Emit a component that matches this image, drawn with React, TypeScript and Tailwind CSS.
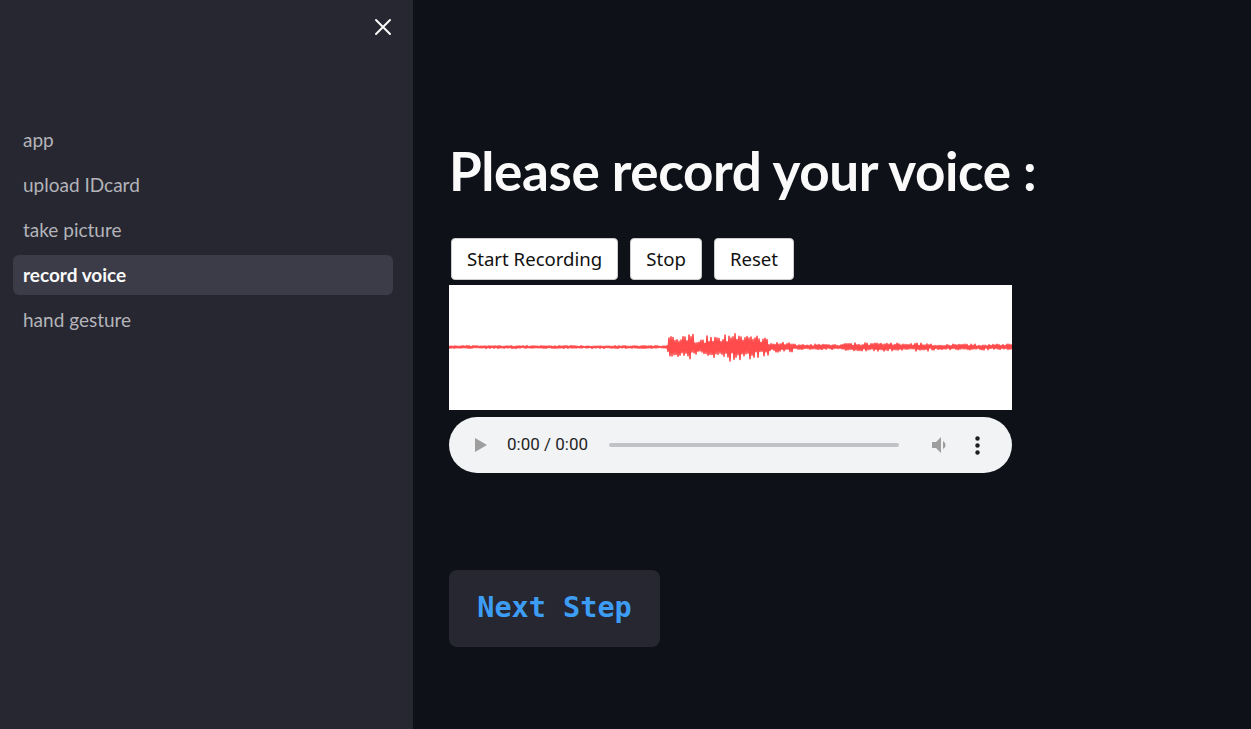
import React from "react";

function rand(seed: number) {
  const x = Math.sin(seed * 12.9898 + 78.233) * 43758.5453;
  return x - Math.floor(x);
}

function envelope(x: number): number {
  let a = 1.3;
  if (x > 218 && x < 245) a = 10 + (x - 218) * 0.1;
  else if (x >= 245 && x < 320) a = 8 + 6 * Math.sin(((x - 245) / 75) * Math.PI);
  else if (x >= 320 && x < 345) a = 5;
  else if (x >= 345 && x < 395) a = 2.6;
  else if (x >= 395 && x < 480) a = 4;
  else if (x >= 480) a = 2.8;
  return a;
}

function Waveform() {
  const W = 563;
  const H = 125;
  const c = 62;
  let d = `M0 ${c}`;
  for (let x = 0; x <= W; x += 1) {
    const a = envelope(x) * (0.35 + 0.65 * rand(x));
    const sign = x % 2 === 0 ? -1 : 1;
    d += ` L${x} ${(c + sign * a).toFixed(1)}`;
  }
  return (
    <svg width={W} height={H} viewBox={`0 0 ${W} ${H}`} className="block">
      <rect width={W} height={H} fill="#ffffff" />
      <path d={d} fill="none" stroke="#ff4b4b" strokeWidth={1.6} strokeLinejoin="round" />
    </svg>
  );
}

export default function App() {
  const items = ["app", "upload IDcard", "take picture", "record voice", "hand gesture"];
  return (
    <div className="flex w-[1251px] h-[729px] overflow-hidden" style={{ fontFamily: '"Source Sans Pro", "Lato", "Noto Sans", sans-serif' }}>
      <aside className="w-[413px] h-full bg-[#262730] flex flex-col shrink-0">
        <div className="flex justify-end pr-[21px] pt-[18px] h-[120px]">
          <svg width="18" height="18" viewBox="0 0 18 18">
            <path d="M2 2 L16 16 M16 2 L2 16" stroke="#fafafa" strokeWidth="2" strokeLinecap="round" />
          </svg>
        </div>
        <nav className="flex flex-col gap-[5px] pl-[13px] pr-[20px]">
          {items.map((it) => {
            const active = it === "record voice";
            return (
              <div
                key={it}
                className={`h-[40px] flex items-center px-[10px] rounded-md text-[19px] ${
                  active ? "bg-[#3b3c47] text-[#fafafa] font-bold" : "text-[#b4b4ba]"
                }`}
              >
                {it}
              </div>
            );
          })}
        </nav>
      </aside>
      <main className="flex-1 bg-[#0e1117] pl-[36px] pt-[139px]">
        <h1 className="text-[#fafafa] font-bold text-[53px] leading-[64px] tracking-[-0.4px]">
          Please record your voice :
        </h1>
        <div className="flex gap-[12px] mt-[35px] pl-[2px]" style={{ fontFamily: '"Noto Sans", "Open Sans", sans-serif' }}>
          {["Start Recording", "Stop", "Reset"].map((b) => (
            <button
              key={b}
              className="h-[42px] px-[15px] bg-white text-[#111] text-[18.6px] rounded-[4px] border border-[#ccc]"
            >
              {b}
            </button>
          ))}
        </div>
        <div className="mt-[5px]">
          <Waveform />
        </div>
        <div
          className="mt-[7px] w-[563px] h-[56px] rounded-full bg-[#f1f3f4] flex items-center pl-[25px]"
          style={{ fontFamily: 'Roboto, "Liberation Sans", sans-serif' }}
        >
          <svg width="14" height="16" viewBox="0 0 14 16">
            <path d="M1 1 L13 8 L1 15 Z" fill="#9e9e9e" />
          </svg>
          <span className="ml-[19px] text-[17px] text-[#1f1f1f]">0:00 / 0:00</span>
          <div className="ml-[21px] w-[290px] h-[4px] rounded-full bg-[#c0c2c5]" />
          <svg className="ml-[30px]" width="24" height="24" viewBox="0 0 24 24">
            <path d="M3 9v6h4l5 5V4L7 9H3zm13.5 3c0-1.77-1.02-3.29-2.5-4.03v8.05c1.48-.73 2.5-2.25 2.5-4.02z" fill="#9e9e9e" />
          </svg>
          <svg className="ml-[22px]" width="5" height="19" viewBox="0 0 5 19">
            <circle cx="2.5" cy="2.5" r="2.2" fill="#1f1f1f" />
            <circle cx="2.5" cy="9.5" r="2.2" fill="#1f1f1f" />
            <circle cx="2.5" cy="16.5" r="2.2" fill="#1f1f1f" />
          </svg>
        </div>
        <button
          className="mt-[97px] w-[211px] h-[77px] rounded-[8px] bg-[#262730] text-[#3d9df5] font-bold text-[28.5px]"
          style={{ fontFamily: '"DejaVu Sans Mono", "Liberation Mono", monospace' }}
        >
          Next Step
        </button>
      </main>
    </div>
  );
}
